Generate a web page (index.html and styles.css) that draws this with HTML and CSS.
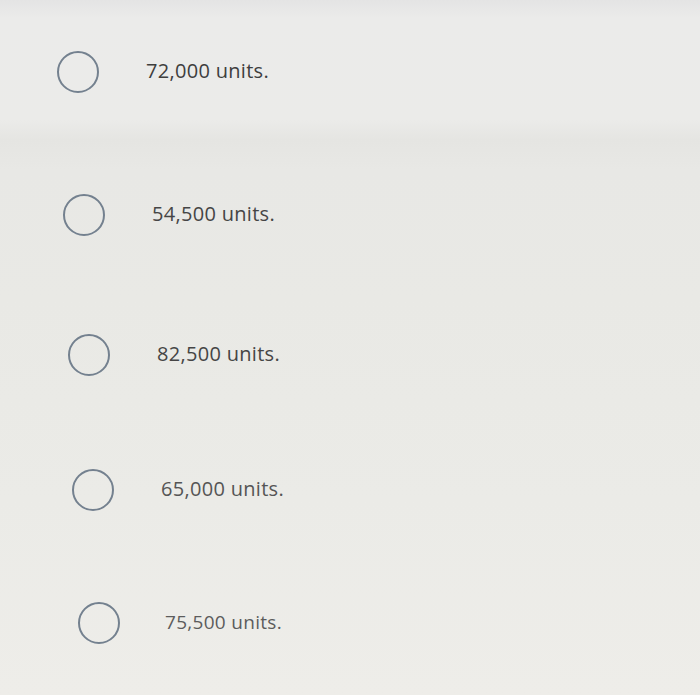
FILE: index.html
```html
<!DOCTYPE html>
<html lang="en">
<head>
<meta charset="utf-8">
<link rel="stylesheet" href="styles.css">
</head>
<body>
<div class="options">
  <label class="option opt-1"><span class="radio"></span><span class="text">72,000 units.</span></label>
  <label class="option opt-2"><span class="radio"></span><span class="text">54,500 units.</span></label>
  <label class="option opt-3"><span class="radio"></span><span class="text">82,500 units.</span></label>
  <label class="option opt-4"><span class="radio"></span><span class="text">65,000 units.</span></label>
  <label class="option opt-5"><span class="radio"></span><span class="text">75,500 units.</span></label>
</div>
</body>
</html>
```
FILE: styles.css
```css
html, body {
  margin: 0;
  padding: 0;
}
body {
  width: 700px;
  height: 695px;
  overflow: hidden;
  font-family: "Open Sans", "Liberation Sans", sans-serif;
  background:
    linear-gradient(180deg, #e4e4e4 0px, #ebebea 18px, #ebebe9 120px, #e5e5e2 140px, #e8e8e5 170px, #e9e9e5 300px, #ebebe7 500px, #eeede9 695px);
}
.options {
  display: flex;
  flex-direction: column;
}
.option {
  display: flex;
  align-items: center;
  gap: 47px;
}
.radio {
  flex: none;
  width: 38px;
  height: 38px;
  border: 2px solid #74818f;
  border-radius: 50%;
  box-sizing: content-box;
}
.text {
  font-size: 20px;
  color: #454545;
  letter-spacing: 0.3px;
  line-height: 26px;
  margin-top: -2px;
}
.opt-1 { height: 144px; margin-left: 57px; }
.opt-1 .text { color: #3e3e3e; }
.opt-2 { height: 142px; margin-left: 63px; }
.opt-3 { height: 138px; margin-left: 68px; }
.opt-4 { height: 132px; margin-left: 72px; gap: 47px; }
.opt-5 { height: 134px; margin-left: 78px; gap: 45px; }
.opt-4 .text { color: #555; }
.opt-5 .text { color: #5c5c5c; font-size: 19px; }
```
